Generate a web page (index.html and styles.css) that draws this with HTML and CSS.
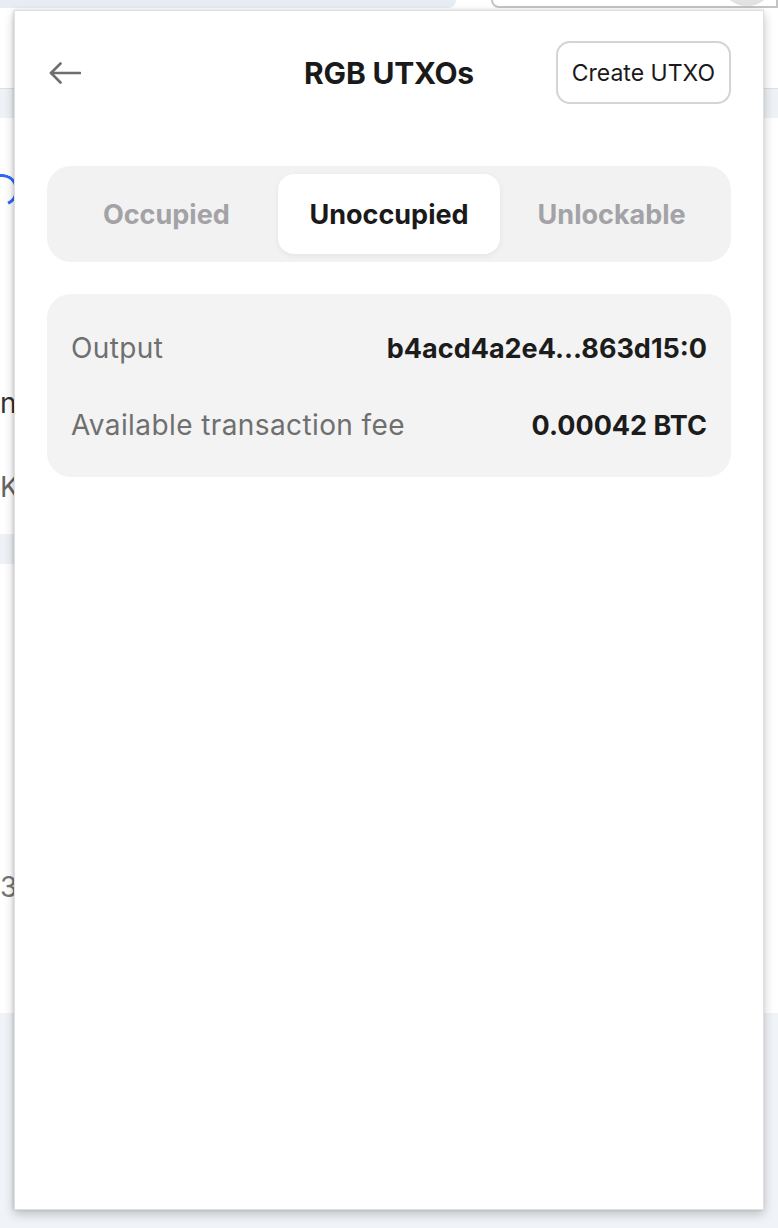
FILE: index.html
```html
<!DOCTYPE html>
<html lang="en">
<head>
  <meta charset="UTF-8" />
  <meta name="viewport" content="width=device-width, initial-scale=1.0" />
  <title>RGB UTXOs</title>
  <link rel="stylesheet" href="styles.css">
</head>
<body>
  <!-- page behind the extension popup -->
  <div class="page">
    <div class="topbar">
      <div class="search"></div>
      <div class="account"><span class="avatar"></span></div>
    </div>
    <div class="nav-strip"></div>
    <div class="main">
      <div class="spinner"></div>
      <div class="frag dark frag-1">n</div>
      <div class="frag gray frag-2">K</div>
      <div class="band"></div>
      <div class="frag gray frag-3">3</div>
    </div>
    <div class="footer-band"></div>
  </div>

  <div class="popup">
    <header class="popup-header">
      <button class="back" aria-label="Back">
        <svg width="32" height="22" viewBox="0 0 32 22" fill="none" stroke="#6e6e6e" stroke-width="2.6" stroke-linecap="round" stroke-linejoin="round">
          <path d="M31 11H2" />
          <path d="M11.5 1.5L2 11l9.5 9.5" />
        </svg>
      </button>
      <h1 class="title">RGB UTXOs</h1>
      <button class="create">Create UTXO</button>
    </header>

    <div class="tabs">
      <div class="tab">Occupied</div>
      <div class="tab active">Unoccupied</div>
      <div class="tab">Unlockable</div>
    </div>

    <div class="utxo-card">
      <div class="row">
        <span class="label">Output</span>
        <span class="value">b4acd4a2e4...863d15:0</span>
      </div>
      <div class="row">
        <span class="label">Available transaction fee</span>
        <span class="value">0.00042 BTC</span>
      </div>
    </div>
  </div>
</body>
</html>
```

FILE: styles.css
```css
body { margin: 0; padding: 0; width: 778px; height: 1228px; overflow: hidden; background: #fff; font-family: Inter, "Noto Sans", sans-serif; position: relative; }

/* background page */
.page { height: 1228px; display: flex; flex-direction: column; }
.topbar { height: 8px; display: flex; justify-content: space-between; }
.search { width: 456px; background: #e8ecf4; border-bottom-right-radius: 30px; }
.account { width: 283px; border: 2px solid #c4c4c4; border-top: none; border-bottom-left-radius: 24px; position: relative; }
.avatar { position: absolute; right: 6px; top: -30px; width: 46px; height: 36px; border-radius: 50%; background: #e2e2e2; }
.nav-strip { margin-top: 80px; height: 29px; background: #eef1f5; border-top: 1px solid #dcdfe4; }
.main { flex: 1; display: flex; flex-direction: column; }
.spinner { width: 26px; height: 26px; margin: 56px 0 0 -14px; border-radius: 50%; border: 3px solid transparent; border-top-color: #2f68ff; border-right-color: #2f68ff; transform: rotate(20deg); }
.frag { padding-left: 0; font-size: 28px; line-height: 34px; }
.dark { color: #333; }
.gray { color: #666; }
.frag-1 { margin-top: 180px; }
.frag-2 { margin-top: 50px; }
.band { margin-top: 30px; height: 30px; width: 40px; background: #eef1f5; }
.frag-3 { margin-top: 306px; color: #777; }
.footer-band { height: 215px; background: #f0f3f7; }

/* extension popup */
.popup { position: absolute; left: 14px; top: 10px; width: 750px; height: 1200px; box-sizing: border-box; padding: 30px 32px; background: #fff; border: 1px solid #e0e0e0; box-shadow: 0 4px 10px rgba(0, 0, 0, 0.22), -1px 0 3px rgba(0, 0, 0, 0.12); }
.popup-header { display: grid; grid-template-columns: 1fr auto 1fr; align-items: center; height: 63px; }
.back { justify-self: start; background: none; border: none; padding: 0 0 0 2px; display: flex; cursor: pointer; }
.title { margin: 0; font-size: 30px; font-weight: 700; color: #1a1a1a; letter-spacing: -0.2px; }
.create { justify-self: end; height: 63px; padding: 0 14px; background: #fff; border: 2px solid #d4d4d4; border-radius: 14px; font-family: Inter, sans-serif; font-size: 23px; color: #1a1a1a; cursor: pointer; }

.tabs { margin-top: 62px; display: grid; grid-template-columns: repeat(3, 1fr); padding: 8px; background: #f2f2f2; border-radius: 24px; }
.tab { height: 80px; display: flex; align-items: center; justify-content: center; border-radius: 16px; font-size: 27px; font-weight: 700; color: #a2a2a7; }
.tab.active { background: #fff; color: #1a1a1a; box-shadow: 0 2px 6px rgba(0, 0, 0, 0.06); }

.utxo-card { margin-top: 32px; padding: 34px 24px 32px; background: #f3f3f3; border-radius: 24px; display: flex; flex-direction: column; gap: 37px; }
.row { display: flex; justify-content: space-between; align-items: center; height: 40px; }
.label { font-size: 28px; letter-spacing: 0.4px; color: #6f6f6f; }
.value { font-size: 27px; font-weight: 700; color: #1c1c1c; }
```
